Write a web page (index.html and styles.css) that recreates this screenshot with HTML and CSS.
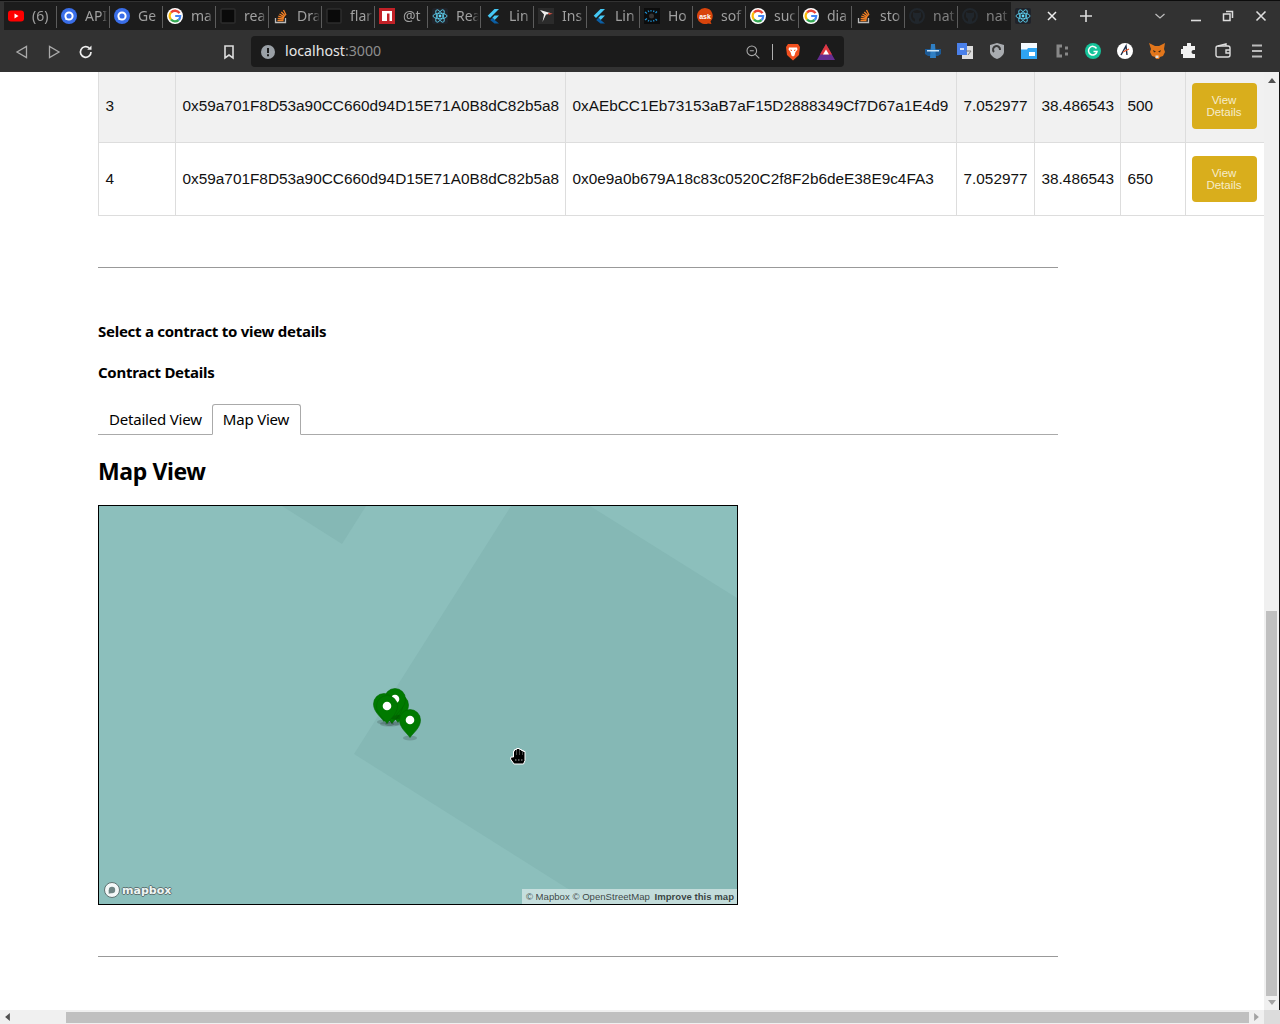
FILE: index.html
```html
<!DOCTYPE html>
<html>

<head>
    <title>localhost:3000</title>
    <meta charset='utf-8'>
    <link rel="stylesheet" href="styles.css">
</head>

<body>
    <svg class='defs' width='0' height='0'>
        <symbol id='i-yt' viewBox='0 0 16 16'><rect y='2.500' width='16' height='11' rx='3' fill='#f00'/><path d='M6.500 5.500l4 2.500-4 2.500z' fill='#fff'/></symbol>
        <symbol id='i-blue' viewBox='0 0 16 16'><circle cx='8' cy='8' r='8' fill='#3a6ee8'/><circle cx='8' cy='8' r='3.600' fill='none' stroke='#fff' stroke-width='2'/><path d='M4.500 8v4h2z' fill='#fff'/></symbol>
        <symbol id='i-g' viewBox='0 0 16 16'><circle cx='8' cy='8' r='8' fill='#fff'/><path d='M12.500 5.200A5.300 5.300 0 0 0 4 4.500' fill='none' stroke='#ea4335' stroke-width='2.400'/><path d='M4 4.500a5.300 5.300 0 0 0 0 7' fill='none' stroke='#fbbc05' stroke-width='2.400'/><path d='M4 11.500a5.300 5.300 0 0 0 7.600.5' fill='none' stroke='#34a853' stroke-width='2.400'/><path d='M11.600 12c1-1 1.600-2.200 1.600-4H8.200' fill='none' stroke='#4285f4' stroke-width='2.200'/></symbol>
        <symbol id='i-dark' viewBox='0 0 16 16'><rect x='1' y='1' width='14' height='14' rx='1' fill='#0a0a0a' stroke='#2c2c2c' stroke-width='1.500'/></symbol>
        <symbol id='i-so' viewBox='0 0 16 16'><path d='M2.500 10v4.500h10V10' fill='none' stroke='#bbb' stroke-width='1.300'/><path d='M4.500 12.500h6M4.700 10.400l6 .6M5.300 8.200l5.800 1.600M6.500 6l5 2.900M8.300 4l4 4M10.500 2l2.500 5' stroke='#f48024' stroke-width='1.300' fill='none'/></symbol>
        <symbol id='i-npm' viewBox='0 0 16 16'><rect width='16' height='16' fill='#c12127'/><path d='M3 3h10v10h-2.500V5.500H8V13H3z' fill='#fff'/></symbol>
        <symbol id='i-react' viewBox='0 0 16 16'><rect width='16' height='16' rx='2' fill='#20232a'/><g fill='none' stroke='#61dafb' stroke-width='.8'><ellipse cx='8' cy='8' rx='7' ry='2.800'/><ellipse cx='8' cy='8' rx='7' ry='2.800' transform='rotate(60 8 8)'/><ellipse cx='8' cy='8' rx='7' ry='2.800' transform='rotate(120 8 8)'/></g><circle cx='8' cy='8' r='1.400' fill='#61dafb'/></symbol>
        <symbol id='i-flutter' viewBox='0 0 16 16'><path d='M9.500 1h4.500L5 10 2.700 7.700z' fill='#45c8f5'/><path d='M9.500 7.500H14L9.700 12 7.400 9.700z' fill='#45c8f5'/><path d='M7.400 9.700l2.300 2.300 4.300 3.500H9.500L5.200 11.900z' fill='#0b5fa5'/></symbol>
        <symbol id='i-ins' viewBox='0 0 16 16'><rect width='16' height='16' fill='#2b2b2b'/><path d='M2 2l12 3.500-6 1-3.500 7.500L6 6.500z' fill='#eee'/><path d='M10 5l5 .5-4 1.500z' fill='#c0392b'/></symbol>
        <symbol id='i-cb' viewBox='0 0 16 16'><rect width='16' height='16' fill='#0c0c0c'/><path d='M1 4l2 1.500M4 2.500l1 1.500M7 2v1.500M10 2.500L9.500 4M13 3.500l-1.500 1.500M1 12l2-1.500M4 13.500l1-1.500M7 14v-1.500M10 13.500L9.500 12M13 12.500L11.500 11' stroke='#1d8fd0' stroke-width='1.200'/><circle cx='7.500' cy='8' r='2.500' fill='#333'/></symbol>
        <symbol id='i-gh' viewBox='0 0 16 16'><circle cx='8' cy='8' r='7' fill='none' stroke='#20262c' stroke-width='2'/><path d='M4 4l2 1h4l2-1v5l-2 2v3H6v-3L4 9z' fill='#20262c'/></symbol>
    </svg>

    <div class='browser'>
        <div class='tabstrip'>
            <div class='tab'><svg class='tabicon'><use href='#i-yt'/></svg><span class='tabtext'>(6)</span></div>
            <div class='tab'><svg class='tabicon'><use href='#i-blue'/></svg><span class='tabtext'>API</span></div>
            <div class='tab'><svg class='tabicon'><use href='#i-blue'/></svg><span class='tabtext'>Ge</span></div>
            <div class='tab'><svg class='tabicon'><use href='#i-g'/></svg><span class='tabtext'>ma</span></div>
            <div class='tab'><svg class='tabicon'><use href='#i-dark'/></svg><span class='tabtext'>rea</span></div>
            <div class='tab'><svg class='tabicon'><use href='#i-so'/></svg><span class='tabtext'>Dra</span></div>
            <div class='tab'><svg class='tabicon'><use href='#i-dark'/></svg><span class='tabtext'>flar</span></div>
            <div class='tab'><svg class='tabicon'><use href='#i-npm'/></svg><span class='tabtext'>@t</span></div>
            <div class='tab'><svg class='tabicon'><use href='#i-react'/></svg><span class='tabtext'>Rea</span></div>
            <div class='tab'><svg class='tabicon'><use href='#i-flutter'/></svg><span class='tabtext'>Lin</span></div>
            <div class='tab'><svg class='tabicon'><use href='#i-ins'/></svg><span class='tabtext'>Ins</span></div>
            <div class='tab'><svg class='tabicon'><use href='#i-flutter'/></svg><span class='tabtext'>Lin</span></div>
            <div class='tab'><svg class='tabicon'><use href='#i-cb'/></svg><span class='tabtext'>Ho</span></div>
            <div class='tab'><svg class='tabicon' viewBox='0 0 16 16'><path d='M8 0a8 8 0 1 0 3 15.400l3.500.6-1-2.500A8 8 0 0 0 8 0z' fill='#d8440c'/><text x='8' y='10.500' text-anchor='middle' font-family='Liberation Sans' font-weight='700' font-size='7' fill='#fff'>ask</text></svg><span class='tabtext'>sof</span></div>
            <div class='tab'><svg class='tabicon'><use href='#i-g'/></svg><span class='tabtext'>suc</span></div>
            <div class='tab'><svg class='tabicon'><use href='#i-g'/></svg><span class='tabtext'>dia</span></div>
            <div class='tab'><svg class='tabicon'><use href='#i-so'/></svg><span class='tabtext'>sto</span></div>
            <div class='tab'><svg class='tabicon'><use href='#i-gh'/></svg><span class='tabtext tabtext-dim'>nat</span></div>
            <div class='tab tab-last'><svg class='tabicon'><use href='#i-gh'/></svg><span class='tabtext tabtext-dim'>nat</span></div>
            <div class='tab-active'>
                <svg class='tabicon'><use href='#i-react'/></svg>
                <svg class='tabclose' viewBox='0 0 12 12'><path d='M2 2l8 8M10 2l-8 8' stroke='#eee' stroke-width='1.500'/></svg>
            </div>
            <svg class='newtab' viewBox='0 0 14 14'><path d='M7 1v12M1 7h12' stroke='#ddd' stroke-width='1.600'/></svg>
            <div class='winbtns'>
                <svg class='winbtn' viewBox='0 0 12 12'><path d='M1.500 4l4.500 4 4.500-4' fill='none' stroke='#bbb' stroke-width='1.300'/></svg>
                <svg class='winbtn winbtn-min' viewBox='0 0 12 12'><path d='M1 10.500h10' stroke='#ddd' stroke-width='1.600'/></svg>
                <svg class='winbtn' viewBox='0 0 12 12'><path d='M4 1.500h6.500V8M1.500 4h6.500v6.500H1.500z' fill='none' stroke='#ddd' stroke-width='1.500'/></svg>
                <svg class='winbtn winbtn-close' viewBox='0 0 12 12'><path d='M1.500 1.500l9 9M10.500 1.500l-9 9' stroke='#ddd' stroke-width='1.600'/></svg>
            </div>
        </div>

        <div class='toolbar'>
            <svg class='navbtn' viewBox='0 0 16 16'><path d='M12.500 2.500v11L3 8z' fill='none' stroke='#aaa' stroke-width='1.300'/></svg>
            <svg class='navbtn' viewBox='0 0 16 16'><path d='M3.500 2.500v11L13 8z' fill='none' stroke='#aaa' stroke-width='1.300'/></svg>
            <svg class='navbtn' viewBox='0 0 16 16'><path d='M13 8a5.300 5.300 0 1 1-1.800-4' fill='none' stroke='#eee' stroke-width='1.700'/><path d='M13.500 1.500v4.300H9.200z' fill='#eee'/></svg>
            <svg class='bookmark' viewBox='0 0 16 16'><path d='M4 2h8v12l-4-3-4 3z' fill='none' stroke='#ddd' stroke-width='1.600'/></svg>
            <div class='addressbar'>
                <svg class='infoicon' viewBox='0 0 14 14'><circle cx='7' cy='7' r='7' fill='#9aa0a6'/><path d='M6 3h2v5H6zM6 9.200h2v2H6z' fill='#1b1b1b'/></svg>
                <span class='url'>localhost<span class='url-port'>:3000</span></span>
                <svg class='zoomicon' viewBox='0 0 14 14'><circle cx='5.800' cy='5.800' r='4.800' fill='none' stroke='#aaa' stroke-width='1.100'/><path d='M9.300 9.300l4 4M3.800 5.800h4' stroke='#aaa' stroke-width='1.100'/></svg>
                <div class='addr-sep'></div>
                <svg class='brave' viewBox='0 0 16 18'><path d='M3 1h10l2 3-1 8-6 5.500L2 12 1 4z' fill='#f1501f'/><path d='M4 4.500h8l.5 2-2 2.500-1 3.500-1.500 1-1.500-1-1-3.500-2-2.500z' fill='#fff'/><path d='M5.500 7l1.500.5M10.500 7L9 7.500' stroke='#f1501f'/></svg>
                <svg class='bat' viewBox='0 0 18 16'><path d='M9 0l9 16H0z' fill='#662d91'/><path d='M9 0l6 10.500H3z' fill='#e0383e'/><path d='M9 5.500l3 5H6z' fill='#fff'/></svg>
            </div>
            <div class='extensions'>
                <svg class='ext' viewBox='0 0 16 16'><path d='M0 6h16v5l-3 2H3l-3-2z' fill='#1c5a96'/><path d='M6 1h4l1 14H5z' fill='#2f7fc4'/><path d='M2 7h12v1.500H2z' fill='#cfe6f7'/></svg>
                <svg class='ext' viewBox='0 0 16 16'><rect x='5' y='3' width='11' height='13' fill='#ddd'/><rect width='10' height='12' fill='#4a80ea'/><path d='M3 6h4' stroke='#fff' stroke-width='1.500'/><path d='M9 8h5M11 12l3-4' stroke='#777'/></svg>
                <svg class='ext' viewBox='0 0 16 16'><path d='M1 2l7-2 7 2v7c0 3-4 6-7 7-3-1-7-4-7-7z' fill='#a9acb0'/><path d='M5 9a3.500 3.500 0 1 1 6-2' fill='none' stroke='#3a3a3a' stroke-width='2'/></svg>
                <svg class='ext' viewBox='0 0 16 16'><rect width='16' height='16' fill='#2fa4f2'/><path d='M0 0h16v5H7L6 6.500H0z' fill='#fff' opacity='.95'/><path d='M8 9h6v4H8z' fill='#fff'/></svg>
                <svg class='ext' viewBox='0 0 16 16'><path d='M9 3H5v10h4' fill='none' stroke='#888' stroke-width='3'/><path d='M12 3.500h3v3h-3zM12 9.500h3v3h-3z' fill='#888'/></svg>
                <svg class='ext' viewBox='0 0 16 16'><circle cx='8' cy='8' r='8' fill='#15c39a'/><path d='M11.500 5.500a4.300 4.300 0 1 0 .5 3H8.500' fill='none' stroke='#fff' stroke-width='1.500'/></svg>
                <svg class='ext' viewBox='0 0 16 16'><circle cx='8' cy='8' r='8' fill='#fff'/><path d='M4 12l5-9 1 9' fill='none' stroke='#1a2a44' stroke-width='1.400'/><path d='M6 9l6-3' stroke='#e8562a' stroke-width='1.300'/></svg>
                <svg class='ext' viewBox='0 0 16 16'><path d='M0 0l6 3h4l6-3-1 6 1 3-2 4-3 1-1 2H7l-1-2-3-1-2-4 1-3z' fill='#e2761b'/><path d='M4 7l3 1.500-2 1zM12 7L9 8.500l2 1z' fill='#3a2a1a'/><path d='M6.500 12.500h3V15h-3z' fill='#ddd'/></svg>
                <svg class='ext' viewBox='0 0 16 16'><path d='M6 1a2 2 0 0 1 4 0v2h4v4h-1.500a2 2 0 0 0 0 4H14v4H2v-4H.500a2.500 2.500 0 0 1 0-5H2V3h4z' fill='#f2f2f2'/></svg>
                <svg class='ext ext-wallet' viewBox='0 0 16 16'><rect x='1' y='3' width='14' height='11' rx='2' fill='none' stroke='#ddd' stroke-width='1.400'/><path d='M3 3l8-2v2M15 7h-4v3h4' fill='none' stroke='#ddd' stroke-width='1.400'/></svg>
                <svg class='ext ext-menu' viewBox='0 0 16 16'><path d='M3 2.500h10M3 8h10M3 13.500h10' stroke='#bbb' stroke-width='1.800'/></svg>
            </div>
        </div>

        <div class='viewport'>
            <div class='page'>
                <table class='contracts'>
                    <colgroup>
                        <col class='c-id'>
                        <col class='c-addr'>
                        <col class='c-addr2'>
                        <col class='c-lat'>
                        <col class='c-lng'>
                        <col class='c-amt'>
                        <col class='c-act'>
                    </colgroup>
                    <tr class='row-even'>
                        <td>3</td>
                        <td>0x59a701F8D53a90CC660d94D15E71A0B8dC82b5a8</td>
                        <td>0xAEbCC1Eb73153aB7aF15D2888349Cf7D67a1E4d9</td>
                        <td>7.052977</td>
                        <td>38.486543</td>
                        <td>500</td>
                        <td><button class='details-btn'>View Details</button></td>
                    </tr>
                    <tr>
                        <td>4</td>
                        <td>0x59a701F8D53a90CC660d94D15E71A0B8dC82b5a8</td>
                        <td>0x0e9a0b679A18c83c0520C2f8F2b6deE38E9c4FA3</td>
                        <td>7.052977</td>
                        <td>38.486543</td>
                        <td>650</td>
                        <td><button class='details-btn'>View Details</button></td>
                    </tr>
                </table>

                <hr class='rule rule-top'>

                <p class='label label-select'>Select a contract to view details</p>
                <p class='label label-details'>Contract Details</p>

                <div class='tabs'>
                    <div class='viewtab'>Detailed View</div>
                    <div class='viewtab viewtab-on'>Map View</div>
                </div>

                <h2 class='map-title'>Map View</h2>

                <div class='map'>
                    <svg class='map-base' viewBox='99 506 638 398'>
                        <rect x='99' y='506' width='638' height='398' fill='#8cbfbc'/>
                        <path d='M282 506L342 544 366 506z' fill='#85b8b5'/>
                        <path d='M511 506H590L737 598V904H592L354 754z' fill='#85b8b5'/>
                    </svg>
                    <svg class='map-pins' viewBox='99 506 638 398'>
                        <defs>
                            <g id='pin'>
                                <ellipse cx='0' cy='18' rx='7' ry='2.500' fill='#000' opacity='.16'/>
                                <path class='pin-body' d='M0 17.500C-3 13-10.500 8-10.500 0A10.500 10.500 0 1 1 10.500 0C10.500 8 3 13 0 17.500z'/>
                                <circle r='4.300' fill='#fff'/>
                            </g>
                        </defs>
                        <use href='#pin' x='398' y='705'/>
                        <use href='#pin' x='392' y='706'/>
                        <use href='#pin' x='395' y='699'/>
                        <use href='#pin' x='384' y='704'/>
                        <use href='#pin' x='387' y='706'/>
                        <use href='#pin' x='410' y='720'/>
                        <path class='hand' d='M511 757h2.500v-6h1v-1.500h2v-1h3v1h2v1h2v1h1.500v9l-1.500 3.500h-9.500l-3.500-5z'/>
                        <path class='hand-lines' d='M516.500 750v5M519.500 749.500v5.500M522.500 751v4'/>
                        <path class='hand-wave' d='M515 760h1.500M518 760h1.500M521 760h1.500'/>
                    </svg>
                    <div class='map-logo'>
                        <svg class='map-logo-icon' viewBox='0 0 16 16'><circle cx='8' cy='8' r='7.500' fill='#f4f8f8' stroke='#5f7372'/><circle cx='8' cy='8' r='3.200' fill='#6f8584'/><path d='M4.700 8v3.800l3.200-.8z' fill='#6f8584'/></svg>
                        <span class='map-logo-text'>mapbox</span>
                    </div>
                    <div class='map-attrib'>© Mapbox © OpenStreetMap <b class='map-improve'>Improve this map</b></div>
                </div>

                <hr class='rule rule-bottom'>
            </div>

            <div class='vscroll'>
                <svg class='arrow' viewBox='0 0 10 6'><path d='M5 0l5 6H0z' fill='#505050'/></svg>
                <div class='vthumb'></div>
                <svg class='arrow' viewBox='0 0 10 6'><path d='M5 6L0 0h10z' fill='#a3a3a3'/></svg>
            </div>
        </div>

        <div class='hscroll'>
            <svg class='harrow' viewBox='0 0 6 10'><path d='M0 5l6-5v10z' fill='#505050'/></svg>
            <div class='hthumb'></div>
            <svg class='harrow' viewBox='0 0 6 10'><path d='M6 5L0 0v10z' fill='#a3a3a3'/></svg>
            <div class='corner'></div>
        </div>
    </div>
</body>

</html>
```

FILE: styles.css
```css
html,
body {
    margin: 0;
    padding: 0;
    height: 100%;
    overflow: hidden
}

.defs {
    position: absolute
}

.browser {
    display: flex;
    flex-direction: column;
    height: 1024px;
    background: #fff
}

/* tab strip */
.tabstrip {
    display: flex;
    align-items: flex-start;
    height: 32px;
    box-sizing: border-box;
    padding-left: 4px;
    padding-top: 1px;
    border-top: 1px solid #0c0c0c;
    background: #323232;
    font-family: "Noto Sans", sans-serif;
    font-size: 14px
}

.tab {
    display: flex;
    align-items: center;
    gap: 8px;
    width: 53px;
    height: 28px;
    box-sizing: border-box;
    flex: none;
    padding-left: 4px;
    background: #1c1c1c;
    position: relative
}

.tab::after {
    content: '';
    position: absolute;
    right: 0;
    top: 4px;
    bottom: 2px;
    width: 1px;
    background: #5c5c5c
}

.tab-last::after {
    display: none
}

.tabicon {
    width: 16px;
    height: 16px;
    flex: none
}

.tabtext {
    width: 24px;
    flex: none;
    margin-bottom: 2px;
    white-space: nowrap;
    color: #a0a0a0;
    -webkit-mask-image: linear-gradient(to right, #000 65%, transparent 95%);
    mask-image: linear-gradient(to right, #000 65%, transparent 95%)
}

.tabtext-dim {
    color: #808080
}

.tab-active {
    display: flex;
    align-items: center;
    width: 53px;
    height: 28px;
    box-sizing: border-box;
    flex: none;
    padding-left: 4px
}

.tabclose {
    width: 12px;
    height: 12px;
    margin-left: 15px
}

.newtab {
    width: 14px;
    height: 14px;
    margin-left: 15px;
    margin-top: 7px
}

.winbtns {
    display: flex;
    align-items: center;
    gap: 20px;
    height: 28px;
    margin-left: 61px
}

.winbtn {
    width: 12px;
    height: 12px
}

.winbtn-min {
    margin-left: 4px
}

.winbtn-close {
    margin-left: 1px
}

/* toolbar */
.toolbar {
    display: flex;
    align-items: center;
    height: 40px;
    box-sizing: border-box;
    background: #323232;
    padding-left: 14px;
    padding-bottom: 1px
}

.navbtn {
    width: 16px;
    height: 16px;
    margin-right: 16px
}

.bookmark {
    width: 16px;
    height: 16px;
    margin-left: 111px
}

.addressbar {
    display: flex;
    align-items: center;
    flex: none;
    width: 593px;
    height: 31px;
    box-sizing: border-box;
    margin-left: 14px;
    padding-left: 10px;
    background: #1b1b1b;
    border-radius: 4px
}

.infoicon {
    width: 14px;
    height: 14px
}

.url {
    margin-left: 10px;
    margin-bottom: 2px;
    width: 461px;
    font-family: "Noto Sans", sans-serif;
    font-size: 14.200px;
    color: #e6e6e6
}

.url-port {
    color: #8e8e8e
}

.zoomicon {
    width: 14px;
    height: 14px
}

.addr-sep {
    width: 1px;
    height: 16px;
    background: #b0b0b0;
    margin-left: 12px
}

.brave {
    width: 16px;
    height: 18px;
    margin-left: 12px
}

.bat {
    width: 18px;
    height: 16px;
    margin-left: 16px
}

.extensions {
    display: flex;
    align-items: center;
    gap: 16px;
    margin-left: 81px;
    margin-bottom: 1px
}

.ext {
    width: 16px;
    height: 16px
}

.ext-wallet {
    margin-left: 2px
}

.ext-menu {
    margin-left: 2px
}

/* page */
.viewport {
    display: flex;
    flex: 1;
    min-height: 0
}

.page {
    flex: 1;
    min-width: 0;
    overflow: hidden;
    padding-left: 98px;
    font-family: "Noto Sans", sans-serif;
    color: #000
}

.contracts {
    border-collapse: collapse;
    table-layout: fixed;
    width: 1166px;
    margin-top: -3px;
    font-family: "Liberation Sans", sans-serif;
    font-size: 15.360px;
    color: #111
}

.contracts td {
    border: 1px solid #ddd;
    padding: 13px 6px 13px 6.500px;
    white-space: nowrap
}

.row-even {
    background: #f1f1f1
}

.c-id {
    width: 77px
}

.c-addr {
    width: 390px
}

.c-addr2 {
    width: 391px
}

.c-lat {
    width: 78px
}

.c-lng {
    width: 86px
}

.c-amt {
    width: 65px
}

.c-act {
    width: 79px
}

.details-btn {
    display: block;
    width: 65px;
    height: 46px;
    margin-left: -1px;
    padding: 0 10px;
    border: 0;
    border-radius: 4px;
    background: #d9ae1c;
    color: #f6eccb;
    font-family: "Liberation Sans", sans-serif;
    font-size: 11.500px;
    line-height: 12px;
    white-space: normal
}

.rule {
    width: 960px;
    height: 0;
    margin: 0;
    border: 0;
    border-top: 1px solid #999
}

.rule-top {
    margin-top: 51px
}

.rule-bottom {
    margin-top: 51px
}

.label {
    margin: 0;
    font-size: 15px;
    font-weight: 700;
    line-height: 20px;
    letter-spacing: -.27px
}

.label-select {
    margin-top: 53px
}

.label-details {
    margin-top: 21px
}

.tabs {
    display: flex;
    width: 960px;
    height: 31px;
    box-sizing: border-box;
    margin-top: 22px;
    border-bottom: 1px solid #aaa;
    font-size: 15px;
    line-height: 30px;
    letter-spacing: -.2px
}

.viewtab {
    padding: 0 10px 0 11px;
    height: 31px;
    box-sizing: border-box
}

.viewtab-on {
    background: #fff;
    border: 1px solid #aaa;
    border-bottom: 1px solid #fff;
    border-radius: 3px 3px 0 0;
    line-height: 28px;
    padding: 0 11px 0 10px
}

.map-title {
    margin: 20px 0 17px;
    font-size: 23px;
    font-weight: 700;
    line-height: 33px;
    letter-spacing: -.4px
}

.map {
    position: relative;
    width: 640px;
    height: 400px;
    box-sizing: border-box;
    border: 1px solid #000;
    overflow: hidden
}

.map-base,
.map-pins {
    position: absolute;
    left: 0;
    top: 0;
    width: 638px;
    height: 398px
}

.pin-body {
    fill: #007a00;
    stroke: #006600;
    stroke-width: .6
}

.hand {
    fill: #000;
    stroke: #fff
}

.hand-lines {
    fill: none;
    stroke: #666;
    stroke-width: .7
}

.hand-wave {
    fill: none;
    stroke: #ddd;
    stroke-width: .8
}

.map-logo {
    position: absolute;
    left: 5px;
    bottom: 6px;
    display: flex;
    align-items: center;
    gap: 2px
}

.map-logo-icon {
    width: 16px;
    height: 16px
}

.map-logo-text {
    font-family: "DejaVu Sans", sans-serif;
    font-size: 11px;
    font-weight: 700;
    color: #eef5f4;
    text-shadow: 1px 0 0 #5f7372, -1px 0 0 #5f7372, 0 1px 0 #5f7372, 0 -1px 0 #5f7372
}

.map-attrib {
    position: absolute;
    right: 0;
    bottom: 0;
    padding: 0 3px 0 4px;
    height: 15px;
    line-height: 16px;
    background: rgba(255, 255, 255, .5);
    font-family: "Liberation Sans", sans-serif;
    font-size: 9.600px;
    color: rgba(0, 0, 0, .72);
    white-space: nowrap
}

.map-improve {
    margin-left: 2px
}

/* scrollbars */
.vscroll {
    display: flex;
    flex-direction: column;
    align-items: center;
    justify-content: flex-end;
    flex: none;
    width: 16px;
    box-sizing: border-box;
    background: #f0f0f0;
    border-right: 1px solid #111;
    position: relative
}

.vthumb {
    width: 11px;
    height: 385px;
    margin-bottom: 4px;
    background: #c0c0c0
}

.arrow {
    width: 8px;
    height: 5px;
    margin-bottom: 5px
}

.vscroll .arrow:first-child {
    position: absolute;
    top: 6px
}

.hscroll {
    display: flex;
    align-items: center;
    height: 14px;
    background: #f0f0f0;
    flex: none
}

.harrow {
    width: 5px;
    height: 8px;
    margin-left: 5px
}

.hthumb {
    width: 1183px;
    height: 11px;
    margin-left: 56px;
    background: #c0c0c0
}

.corner {
    width: 16px;
    height: 14px;
    margin-left: 5px;
    background: #dcdcdc
}
```
